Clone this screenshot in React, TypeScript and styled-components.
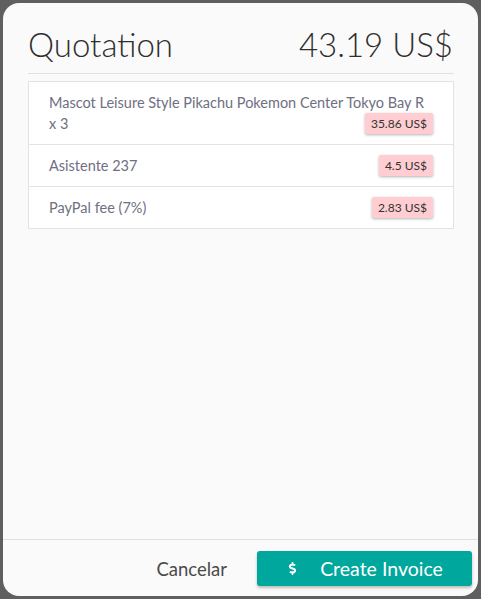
import styled, { createGlobalStyle } from "styled-components";
import { FaDollarSign } from "react-icons/fa";

const GlobalStyle = createGlobalStyle`
  html, body {
    margin: 0;
    padding: 0;
    background: #5f5f5f;
  }
  body {
    padding: 3px;
    font-family: Lato, "Noto Sans", sans-serif;
  }
`;

type Item = { label: string; price: string };

const items: Item[] = [
  { label: "Mascot Leisure Style Pikachu Pokemon Center Tokyo Bay R x 3", price: "35.86 US$" },
  { label: "Asistente 237", price: "4.5 US$" },
  { label: "PayPal fee (7%)", price: "2.83 US$" },
];

const App = () => {
  return (
    <>
      <GlobalStyle />
      <Modal>
        <Content>
          <Header>
            <Title>Quotation</Title>
            <Total>43.19 US$</Total>
          </Header>
          <List>
            {items.map((item) => (
              <Row key={item.label}>
                {item.label}
                <Badge>{item.price}</Badge>
              </Row>
            ))}
          </List>
        </Content>
        <Footer>
          <TextButton>Cancelar</TextButton>
          <PrimaryButton>
            <FaDollarSign size={13} />
            <span>Create Invoice</span>
          </PrimaryButton>
        </Footer>
      </Modal>
    </>
  );
};

const Modal = styled.div`
  display: flex;
  flex-direction: column;
  height: 593px;
  background: #fafafa;
  border-radius: 16px;
  overflow: hidden;
`;

const Content = styled.div`
  flex: 1;
  padding: 0 24px 0 25px;
`;

const Header = styled.div`
  display: flex;
  align-items: baseline;
  justify-content: space-between;
  padding: 21px 1px 9px 0;
  border-bottom: 1px solid #e0e0e0;
  color: #2e2e2e;
`;

const Title = styled.h1`
  margin: 0;
  font-size: 33px;
  font-weight: 300;
  line-height: 40px;
`;

const Total = styled.div`
  font-size: 33px;
  font-weight: 300;
  line-height: 40px;
`;

const List = styled.div`
  margin-top: 7px;
  background: #fff;
  border: 1px solid #e3e3e3;
`;

const Row = styled.div`
  display: flow-root;
  padding: 10px 20px;
  font-size: 14.5px;
  line-height: 21px;
  color: #6e7081;
  & + & {
    border-top: 1px solid #e3e3e3;
  }
`;

const Badge = styled.span`
  float: right;
  padding: 0 6px;
  height: 21px;
  line-height: 21px;
  font-size: 12px;
  color: #333;
  background: #ffcdd2;
  border-radius: 2px;
  box-shadow: 0 1px 3px rgba(0, 0, 0, 0.3);
`;

const Footer = styled.div`
  display: flex;
  justify-content: flex-end;
  align-items: center;
  gap: 14px;
  padding: 11px 6px 10px 0;
  border-top: 1px solid #e0e0e0;
`;

const TextButton = styled.button`
  border: none;
  background: transparent;
  padding: 0 16px;
  height: 35px;
  font-family: inherit;
  font-size: 18.5px;
  font-weight: 400;
  color: #4a4a4a;
  cursor: pointer;
`;

const PrimaryButton = styled.button`
  display: flex;
  align-items: center;
  justify-content: center;
  gap: 21px;
  width: 215px;
  height: 35px;
  border: none;
  border-radius: 3px;
  background: #00a79d;
  color: #fff;
  font-family: inherit;
  font-size: 19.5px;
  box-shadow: 0 2px 3px rgba(0, 0, 0, 0.25);
  cursor: pointer;
`;

export default App;
